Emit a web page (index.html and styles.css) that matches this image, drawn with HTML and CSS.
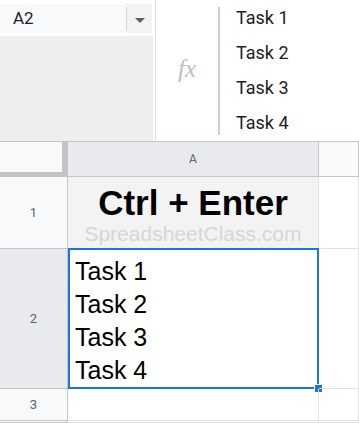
FILE: index.html
```html
<!DOCTYPE html>
<html>
<head>
<meta charset="utf-8">
<link rel="stylesheet" href="styles.css">
</head>
<body>
<div class="top">
  <div class="namepanel">
    <div class="namerow">
      <div class="namebox">A2</div>
      <div class="namesep"></div>
      <div class="dropdown">
        <svg width="10" height="5" viewBox="0 0 10 5"><path d="M0 0 L10 0 L5 5 Z" fill="#5f6368"/></svg>
      </div>
    </div>
    <div class="namefill"></div>
  </div>
  <div class="fxcell"><span class="fx">fx</span></div>
  <div class="fsep"></div>
  <div class="formula">
    <div class="fline">Task 1</div>
    <div class="fline">Task 2</div>
    <div class="fline">Task 3</div>
    <div class="fline">Task 4</div>
  </div>
</div>
<div class="grid">
  <div class="corner"></div>
  <div class="colhead selected">A</div>
  <div class="colhead"></div>

  <div class="rowhead">1</div>
  <div class="cell title">
    <div class="title-text">Ctrl + Enter</div>
    <div class="watermark">SpreadsheetClass.com</div>
  </div>
  <div class="cell"></div>

  <div class="rowhead selected">2</div>
  <div class="cell active">
    <div class="tasks">
      <div>Task 1</div>
      <div>Task 2</div>
      <div>Task 3</div>
      <div>Task 4</div>
    </div>
    <div class="selection"><div class="handle"></div></div>
  </div>
  <div class="cell"></div>

  <div class="rowhead">3</div>
  <div class="cell"></div>
  <div class="cell"></div>

  <div class="rowhead"></div>
  <div class="cell"></div>
  <div class="cell"></div>
</div>
</body>
</html>
```

FILE: styles.css
```css
* { box-sizing: border-box; }
html, body {
  margin: 0;
  padding: 0;
  width: 359px;
  height: 423px;
  overflow: hidden;
  background: #ffffff;
  font-family: Roboto, "Liberation Sans", Arial, sans-serif;
}

/* ---------- top bar ---------- */
.top {
  display: flex;
  height: 142px;
  border-bottom: 1px solid #c4c7c5;
  background: #ffffff;
}
.namepanel {
  width: 156px;
  border-right: 1px solid #e0e0e0;
  display: flex;
  flex-direction: column;
}
.namerow {
  display: flex;
  align-items: center;
  height: 36px;
  padding-top: 4px;
  padding-bottom: 3px;
}
.namebox {
  width: 126px;
  height: 29px;
  background: #f8f9fa;
  font-size: 17px;
  line-height: 29px;
  padding-left: 13px;
  color: #202124;
}
.namesep {
  width: 1px;
  height: 24px;
  background: #d5d5d5;
}
.dropdown {
  width: 25px;
  height: 29px;
  background: #f3f3f3;
  display: flex;
  align-items: center;
  justify-content: center;
}
.dropdown svg { display: block; margin-top: 3px; }
.namefill {
  flex: 1;
  width: 153px;
  background: #eeeeee;
}
.fxcell {
  width: 62px;
  display: flex;
  align-items: center;
  justify-content: center;
}
.fx {
  font-family: "Liberation Serif", "DejaVu Serif", serif;
  font-style: italic;
  font-size: 25px;
  color: #c0c0c0;
  margin-top: -4px;
}
.fsep {
  width: 2px;
  height: 128px;
  margin-top: 7px;
  background: #cfcfcf;
}
.formula {
  padding-left: 16px;
}
.fline {
  font-size: 18px;
  line-height: 35px;
  color: #202124;
}

/* ---------- grid ---------- */
.grid {
  display: grid;
  grid-template-columns: 68px 251px 1fr;
  grid-template-rows: 35px 72px 140px 32px 1fr;
  height: 281px;
}
.corner {
  background: #f8f9fa;
  border-right: 6px solid #c4c4c4;
  border-bottom: 5px solid #c4c4c4;
}
.colhead {
  background: #f8f9fa;
  border-right: 1px solid #c4c7c5;
  border-bottom: 1px solid #c4c7c5;
  font-size: 12px;
  color: #5f6368;
  display: flex;
  align-items: center;
  justify-content: center;
}
.colhead.selected { background: #e8eaed; }
.rowhead {
  background: #f8f9fa;
  border-right: 1px solid #c4c7c5;
  border-bottom: 1px solid #c4c7c5;
  font-size: 13px;
  color: #5f6368;
  display: flex;
  align-items: center;
  justify-content: center;
}
.rowhead.selected { background: #e8eaed; }
.cell {
  border-right: 1px solid #e2e2e2;
  border-bottom: 1px solid #e2e2e2;
  position: relative;
}
.title {
  background: #f3f3f3;
  font-family: "Liberation Sans", Arial, sans-serif;
  text-align: center;
  padding-top: 6px;
}
.title-text {
  font-weight: bold;
  font-size: 35px;
  line-height: 40px;
  color: #000000;
}
.watermark {
  position: absolute;
  left: 0;
  right: 0;
  top: 46px;
  text-align: center;
  font-size: 21px;
  line-height: 21px;
  color: #d6d6d6;
}
.active { overflow: visible; }
.tasks {
  font-family: "Liberation Sans", Arial, sans-serif;
  font-size: 25px;
  line-height: 33px;
  color: #000000;
  padding: 6px 0 0 7px;
}
.selection {
  position: absolute;
  left: 0;
  top: -1px;
  right: -1px;
  bottom: -1px;
  border: 2px solid #1a73e8;
  pointer-events: none;
}
.handle {
  position: absolute;
  right: -6px;
  bottom: -6px;
  width: 9px;
  height: 9px;
  background: #1a73e8;
  border: 1px solid #ffffff;
}
```
